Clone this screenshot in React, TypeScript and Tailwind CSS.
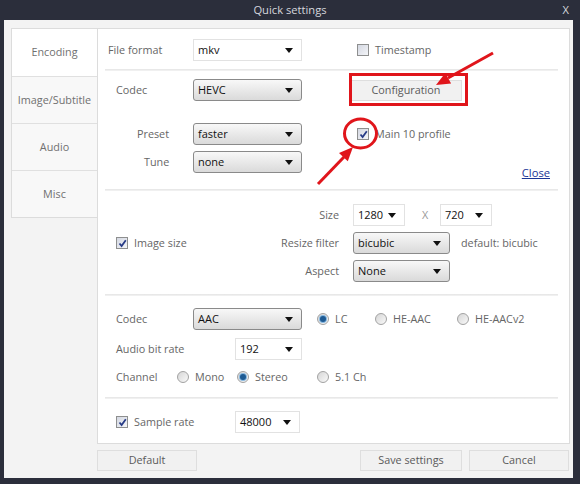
import clsx from 'clsx';

function Caret() {
  return (
    <svg width="8" height="5" viewBox="0 0 8 5" className="shrink-0">
      <path d="M0 0h8L4 5z" fill="#111" />
    </svg>
  );
}

function Select({ value, className, flat }: { value: string; className: string; flat?: boolean }) {
  return (
    <div
      className={clsx(
        'flex h-[22px] shrink-0 items-center justify-between pl-[4px] pr-[8px] text-[11px] text-[#111]',
        flat
          ? 'border border-[#e2e2e2] bg-white'
          : 'rounded-[3px] border border-[#8a8a8a] bg-gradient-to-b from-[#f8f8f8] to-[#dadada]',
        className,
      )}
    >
      <span>{value}</span>
      <Caret />
    </div>
  );
}

function Check({ checked }: { checked?: boolean }) {
  return (
    <span className="flex h-[12px] w-[12px] shrink-0 items-center justify-center border border-[#8e8f8f] bg-gradient-to-br from-[#d4d8e2] to-[#f4f5f8]">
      {checked && (
        <svg width="9" height="9" viewBox="0 0 9 9">
          <path d="M1.5 4.5 3.6 7 7.8 1.2" fill="none" stroke="#263a86" strokeWidth="1.8" />
        </svg>
      )}
    </span>
  );
}

function Radio({ on, label, className }: { on?: boolean; label: string; className?: string }) {
  return (
    <div className={clsx('flex items-center gap-[6px]', className)}>
      <span className="flex h-[12px] w-[12px] shrink-0 items-center justify-center rounded-full border border-[#a2a2a2] bg-gradient-to-br from-[#d6d6d6] to-[#f9f9f9]">
        {on && <span className="h-[6px] w-[6px] rounded-full bg-[#1d5a93] ring-1 ring-[#86b7df]" />}
      </span>
      <span>{label}</span>
    </div>
  );
}

function Divider() {
  return <div className="ml-[7px] mr-[11px] h-[2px] bg-gradient-to-b from-[#e4e4e4] to-[#f4f4f4]" />;
}

function Button({ children, className }: { children: string; className: string }) {
  return (
    <div
      className={clsx(
        'flex h-[21px] items-center justify-center border border-[#dedede] bg-[#f1f1f1] text-[10.8px] text-[#5a5a5a]',
        className,
      )}
    >
      {children}
    </div>
  );
}

const tabs = ['Encoding', 'Image/Subtitle', 'Audio', 'Misc'];

export default function App() {
  return (
    <div className="relative flex h-[484px] w-[580px] flex-col bg-[#2b2e3b] font-['Open_Sans','Noto_Sans',sans-serif] text-[10.8px] text-[#666]">
      <div className="grid h-[20px] grid-cols-[1fr_auto_1fr] items-center text-[11.2px] text-[#d6d7dd]">
        <span />
        <span>Quick settings</span>
        <span className="justify-self-end pr-[11px]">X</span>
      </div>

      <div className="mb-[6px] ml-[4px] mr-[7px] flex flex-1 flex-col bg-[#f3f3f3]">
        <div className="flex pl-[7px] pt-[8px]">
          {/* tabs */}
          <div className="flex w-[86px] flex-col self-start border-b border-l border-t border-[#dcdcdc]">
            {tabs.map((t, i) => (
              <div
                key={t}
                className={clsx(
                  'flex h-[47px] items-center justify-center text-[#707070]',
                  i > 0 && 'border-t border-[#e0e0e0]',
                  i === 0 ? 'bg-white' : 'bg-[#f8f8f8]',
                )}
              >
                {t}
              </div>
            ))}
          </div>

          {/* panel */}
          <div className="flex h-[416px] w-[473px] flex-col border border-[#dcdcdc] bg-white">
            <div className="flex h-[40px] items-start pl-[10px] pt-[10px]">
              <div className="flex h-[22px] w-[85px] items-center">File format</div>
              <Select value="mkv" flat className="w-[109px]" />
              <div className="ml-[55px] flex h-[22px] items-center gap-[6px]">
                <Check />
                <span>Timestamp</span>
              </div>
            </div>
            <Divider />

            <div className="flex h-[118px] flex-col pt-[8px]">
              <div className="flex items-center pl-[18px]">
                <div className="w-[77px]">Codec</div>
                <Select value="HEVC" className="w-[109px]" />
                <Button className="ml-[48px] w-[112px]">Configuration</Button>
              </div>
              <div className="mt-[22px] flex items-center">
                <div className="w-[95px] pl-[39px]">Preset</div>
                <Select value="faster" className="w-[109px]" />
                <div className="ml-[55px] flex items-center gap-[6px]">
                  <Check checked />
                  <span>Main 10 profile</span>
                </div>
              </div>
              <div className="mt-[6px] flex items-start">
                <div className="flex h-[22px] w-[95px] items-center pl-[46px]">Tune</div>
                <Select value="none" className="w-[109px]" />
                <a className="ml-auto mr-[19px] mt-[14px] leading-[16px] text-[11.2px] text-[#1a3596] underline">Close</a>
              </div>
            </div>
            <Divider />

            <div className="flex h-[103px] flex-col gap-[6px] pt-[13px]">
              <div className="flex items-center">
                <div className="w-[255px] pr-[14px] text-right">Size</div>
                <Select value="1280" flat className="w-[52px]" />
                <span className="ml-[17px] w-[18px] text-[#999]">X</span>
                <Select value="720" flat className="w-[52px]" />
              </div>
              <div className="flex items-center">
                <div className="flex w-[255px] items-center justify-between pl-[18px] pr-[14px]">
                  <div className="flex items-center gap-[6px]">
                    <Check checked />
                    <span>Image size</span>
                  </div>
                  <span>Resize filter</span>
                </div>
                <Select value="bicubic" className="w-[97px]" />
                <span className="ml-[11px]">default: bicubic</span>
              </div>
              <div className="flex items-center">
                <div className="w-[255px] pr-[14px] text-right">Aspect</div>
                <Select value="None" className="w-[97px]" />
              </div>
            </div>
            <Divider />

            <div className="flex h-[101px] flex-col pl-[18px] pt-[12px]">
              <div className="flex items-center">
                <div className="w-[77px]">Codec</div>
                <Select value="AAC" className="w-[109px]" />
                <Radio on label="LC" className="ml-[15px] w-[58px]" />
                <Radio label="HE-AAC" className="w-[82px]" />
                <Radio label="HE-AACv2" />
              </div>
              <div className="mt-[8px] flex items-center">
                <div className="w-[119px]">Audio bit rate</div>
                <Select value="192" flat className="w-[67px]" />
              </div>
              <div className="mt-[6px] flex h-[22px] items-center">
                <div className="w-[61px]">Channel</div>
                <Radio label="Mono" className="w-[60px]" />
                <Radio on label="Stereo" className="w-[80px]" />
                <Radio label="5.1 Ch" />
              </div>
            </div>
            <Divider />

            <div className="flex flex-1 items-start pl-[18px] pt-[12px]">
              <div className="flex h-[22px] w-[119px] items-center gap-[6px]">
                <Check checked />
                <span>Sample rate</span>
              </div>
              <Select value="48000" flat className="w-[65px]" />
            </div>
          </div>
        </div>

        <div className="mt-[6px] flex pr-[4px]">
          <Button className="ml-[93px] w-[100px]">Default</Button>
          <Button className="ml-auto w-[102px]">Save settings</Button>
          <Button className="ml-[7px] w-[100px]">Cancel</Button>
        </div>
      </div>

      {/* red annotations drawn over the dialog */}
      <svg className="pointer-events-none absolute inset-0" width="580" height="484" viewBox="0 0 580 484">
        <g stroke="#e0151b" strokeWidth="3" fill="none">
          <rect x="350.5" y="74.5" width="116" height="30" />
          <ellipse cx="360.5" cy="133.5" rx="16" ry="14.5" />
          <line x1="493" y1="53" x2="448" y2="78" />
          <line x1="318" y1="184" x2="344" y2="157" />
        </g>
        <g fill="#e0151b">
          <polygon points="436,85 451.1,83.4 445.3,72.9" />
          <polygon points="353,147 347.8,161.3 339,153.1" />
        </g>
      </svg>
    </div>
  );
}
